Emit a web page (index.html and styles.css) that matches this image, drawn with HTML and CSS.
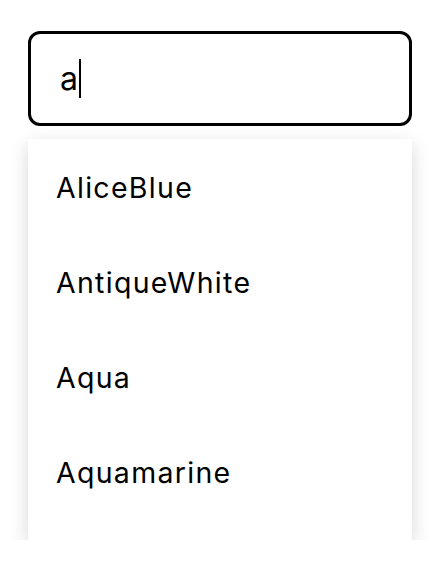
FILE: index.html
```html
<!DOCTYPE html>
<html>
<head>
<meta charset="utf-8">
<link rel="stylesheet" href="styles.css">
</head>
<body>
<div class="combo">
  <div class="field"><span class="value">a</span><span class="caret"></span></div>
  <ul class="list">
    <li class="option">AliceBlue</li>
    <li class="option">AntiqueWhite</li>
    <li class="option">Aqua</li>
    <li class="option">Aquamarine</li>
  </ul>
</div>
</body>
</html>
```
FILE: styles.css
```css
html, body {
  margin: 0;
  background: #fff;
}
body {
  padding: 31px 30px 0 28px;
  font-family: Inter, "Noto Sans", sans-serif;
  color: #000;
}
.combo {
  width: 384px;
}
.field {
  box-sizing: border-box;
  height: 95px;
  border: 3px solid #000;
  border-radius: 12px;
  padding: 0 0 0 29px;
  display: flex;
  align-items: center;
  font-size: 32px;
}
.value {
  line-height: 39px;
}
.caret {
  display: inline-block;
  width: 2px;
  height: 39px;
  background: #000;
  margin-left: 1px;
}
.list {
  list-style: none;
  margin: 13px 0 0;
  padding: 1px 0 20px;
  background: #fff;
  box-shadow: 0 6px 18px rgba(0, 0, 0, 0.16);
}
.option {
  height: 95px;
  line-height: 95px;
  padding-left: 28px;
  font-size: 28.5px;
  letter-spacing: 1.3px;
}
```
